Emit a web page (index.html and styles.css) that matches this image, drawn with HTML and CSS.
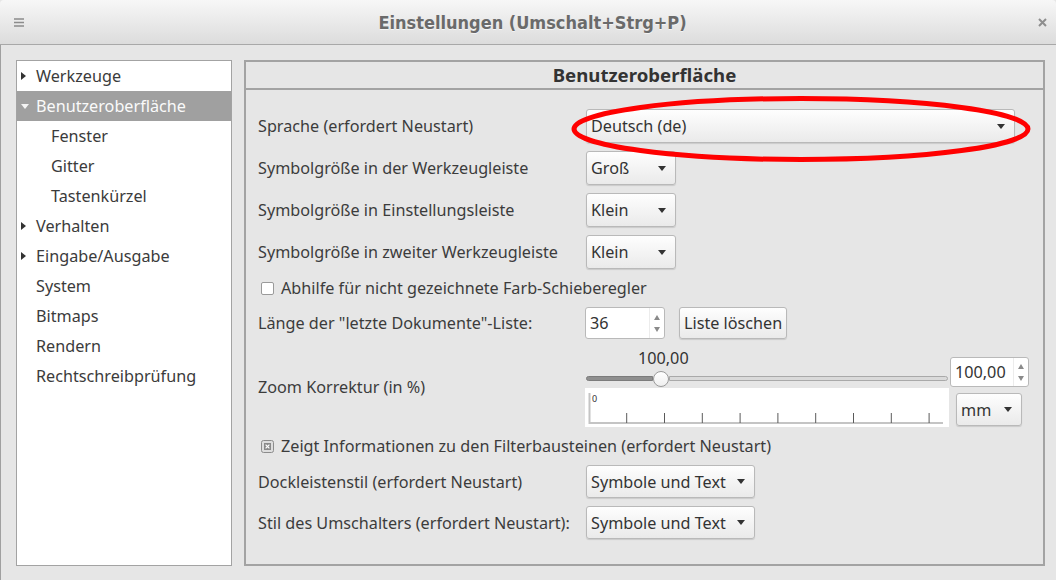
FILE: index.html
```html
<!DOCTYPE html>
<html lang="de">
<head>
<meta charset="utf-8">
<title>Einstellungen</title>
<link rel="stylesheet" href="styles.css">
</head>
<body>
<div class="window">
  <header class="titlebar">
    <span class="menu-icon">
      <svg width="10" height="9" viewBox="0 0 10 9"><path d="M0 1h10M0 4.5h10M0 8h10" stroke="#8c8c8c" stroke-width="1.5"/></svg>
    </span>
    <h1 class="title">Einstellungen (Umschalt+Strg+P)</h1>
    <span class="close-icon">
      <svg width="9" height="9" viewBox="0 0 9 9"><path d="M1 1L8 8M8 1L1 8" stroke="#8e8e8e" stroke-width="2"/></svg>
    </span>
  </header>
  <div class="content">
    <nav class="tree">
      <div class="tree-row"><span class="arrow-slot"><span class="tri-right"></span></span>Werkzeuge</div>
      <div class="tree-row selected"><span class="arrow-slot"><span class="tri-down"></span></span>Benutzeroberfläche</div>
      <div class="tree-row child">Fenster</div>
      <div class="tree-row child">Gitter</div>
      <div class="tree-row child">Tastenkürzel</div>
      <div class="tree-row"><span class="arrow-slot"><span class="tri-right"></span></span>Verhalten</div>
      <div class="tree-row"><span class="arrow-slot"><span class="tri-right"></span></span>Eingabe/Ausgabe</div>
      <div class="tree-row"><span class="arrow-slot"></span>System</div>
      <div class="tree-row"><span class="arrow-slot"></span>Bitmaps</div>
      <div class="tree-row"><span class="arrow-slot"></span>Rendern</div>
      <div class="tree-row"><span class="arrow-slot"></span>Rechtschreibprüfung</div>
    </nav>
    <section class="group">
      <h2 class="group-title">Benutzeroberfläche</h2>
      <div class="form">
        <span class="label">Sprache (erfordert Neustart)</span>
        <div class="combo w-lang"><span>Deutsch (de)</span><span class="caret"></span></div>

        <span class="label">Symbolgröße in der Werkzeugleiste</span>
        <div class="combo w-size"><span>Groß</span><span class="caret"></span></div>

        <span class="label">Symbolgröße in Einstellungsleiste</span>
        <div class="combo w-size"><span>Klein</span><span class="caret"></span></div>

        <span class="label">Symbolgröße in zweiter Werkzeugleiste</span>
        <div class="combo w-size"><span>Klein</span><span class="caret"></span></div>

        <div class="check-row"><span class="box"></span><span>Abhilfe für nicht gezeichnete Farb-Schieberegler</span></div>

        <span class="label">Länge der "letzte Dokumente"-Liste:</span>
        <div class="inline-controls">
          <div class="spin w-spin"><span class="spin-text">36</span><span class="spin-arrows"><span class="up"></span><span class="down"></span></span></div>
          <div class="button">Liste löschen</div>
        </div>

        <span class="label">Zoom Korrektur (in %)</span>
        <div class="zoom">
          <div class="zoom-left">
            <div class="slider-value">100,00</div>
            <div class="slider"><span class="slider-fill"></span><span class="handle"></span><span class="slider-rest"></span></div>
            <div class="ruler">
              <svg width="364" height="39" viewBox="0 0 364 39">
                <path d="M4.5 5V36M4 35H358" stroke="#c4c4c4" stroke-width="2" fill="none"/>
                <path d="M41.7 25V35M79.5 25V35M117.3 25V35M155.1 25V35M192.9 25V35M230.7 25V35M268.5 25V35M306.3 25V35M344.1 25V35" stroke="#5a5a5a" stroke-width="1" fill="none"/>
                <text x="7" y="14" font-size="9" font-family="Noto Sans, sans-serif" fill="#333">0</text>
              </svg>
            </div>
          </div>
          <div class="zoom-right">
            <div class="spin w-zoomspin"><span class="spin-text">100,00</span><span class="spin-arrows"><span class="up"></span><span class="down"></span></span></div>
            <div class="combo w-unit"><span>mm</span><span class="caret"></span></div>
          </div>
        </div>

        <div class="check-row">
          <span class="box-mixed">
            <svg width="13" height="13" viewBox="0 0 13 13"><rect x="0.5" y="0.5" width="12" height="12" rx="2" fill="#dedede" stroke="#8c8c8c"/><rect x="3" y="3" width="7" height="7" fill="#8a8a8a"/><path d="M4.6 4.6L8.4 8.4M8.4 4.6L4.6 8.4" stroke="#fff" stroke-width="1.2"/></svg>
          </span>
          <span>Zeigt Informationen zu den Filterbausteinen (erfordert Neustart)</span>
        </div>

        <span class="label">Dockleistenstil (erfordert Neustart)</span>
        <div class="combo w-style"><span>Symbole und Text</span><span class="caret"></span></div>

        <span class="label">Stil des Umschalters (erfordert Neustart):</span>
        <div class="combo w-style"><span>Symbole und Text</span><span class="caret"></span></div>
      </div>
    </section>
  </div>
  <svg class="annotation" width="1056" height="580" viewBox="0 0 1056 580">
    <ellipse cx="801" cy="129" rx="227" ry="30.5" fill="none" stroke="#ff0000" stroke-width="5"/>
  </svg>
</div>
</body>
</html>
```

FILE: styles.css
```css
* { box-sizing: border-box; }

body {
  margin: 0;
  font-family: "Noto Sans", "Open Sans", sans-serif;
  font-size: 16.2px;
  color: #3c3c3c;
  background: #e6e6e6;
}

.window {
  position: relative;
  width: 1056px;
  height: 580px;
  overflow: hidden;
  background: #e6e6e6;
}

.titlebar {
  height: 45px;
  border-bottom: 1px solid #a8a8a8;
  background: linear-gradient(#f7f7f7, #dcdcdc);
  display: grid;
  grid-template-columns: 40px 1fr 40px;
  align-items: center;
  padding: 0 9px 0 14px;
  border-radius: 4px 4px 0 0;
}

.menu-icon { display: flex; align-items: center; }
.close-icon { display: flex; justify-content: flex-end; align-items: center; }

.title {
  margin: 0;
  text-align: center;
  font-family: "DejaVu Sans Condensed", "DejaVu Sans", sans-serif;
  font-weight: bold;
  font-size: 18px;
  color: #6a6a6a;
  padding-left: 4px;
  text-shadow: 0 1px 0 rgba(255,255,255,0.6);
}

.content {
  display: flex;
  gap: 12px;
  height: 535px;
  padding: 15px 0 0 15px;
  border-left: 1px solid #a0a0a0;
}

.tree {
  width: 216px;
  height: 506px;
  background: #fff;
  border: 1px solid #a3a3a3;
  color: #3b3b3b;
}

.tree-row {
  height: 30px;
  display: flex;
  align-items: center;
  padding-left: 4px;
}

.tree-row.child { padding-left: 34px; }

.tree-row.selected {
  background: #a0a0a0;
  color: #fafafa;
}

.arrow-slot {
  width: 15px;
  display: flex;
  align-items: center;
}

.tri-right {
  width: 0;
  height: 0;
  border-top: 4px solid transparent;
  border-bottom: 4px solid transparent;
  border-left: 5px solid #333;
}

.tri-down {
  width: 0;
  height: 0;
  border-left: 4px solid transparent;
  border-right: 4px solid transparent;
  border-top: 5px solid #f4f4f4;
}

.group {
  width: 801px;
  height: 506px;
  border: 2px solid #a3a3a3;
}

.group-title {
  margin: 0;
  height: 28px;
  border-bottom: 2px solid #a3a3a3;
  font-size: 18.6px;
  font-weight: bold;
  text-align: center;
  line-height: 26px;
  color: #333;
}

.form {
  display: grid;
  grid-template-columns: 327px auto;
  row-gap: 8px;
  padding: 19px 0 0 12px;
  align-items: center;
  justify-items: start;
}

.label { white-space: nowrap; }

.combo {
  height: 34px;
  border: 1px solid #b9b9b9;
  border-radius: 3px;
  background: linear-gradient(#fefefe, #eaeaea);
  box-shadow: 0 1px 1px rgba(0,0,0,0.12);
  display: flex;
  align-items: center;
  justify-content: space-between;
  padding: 0 9px 0 4px;
  margin-left: 1px;
  color: #333;
  white-space: nowrap;
}

.caret {
  width: 0;
  height: 0;
  border-left: 4px solid transparent;
  border-right: 4px solid transparent;
  border-top: 5px solid #333;
}

.w-lang { width: 429px; }
.w-size { width: 90px; }
.w-style { width: 169px; height: 33px; }
.w-unit { width: 66px; height: 33px; margin-left: 6px; margin-top: 6px; }

.check-row {
  grid-column: 1 / -1;
  height: 22px;
  display: flex;
  align-items: center;
  gap: 7px;
  padding-left: 3px;
  white-space: nowrap;
}

.box {
  width: 13px;
  height: 13px;
  border: 1px solid #9a9a9a;
  border-radius: 2px;
  background: #fff;
}

.box-mixed { display: flex; }

.inline-controls {
  display: flex;
  align-items: center;
  gap: 14px;
}

.spin {
  display: flex;
  height: 32px;
  border: 1px solid #b9b9b9;
  border-radius: 3px;
  background: #fff;
  color: #333;
}

.w-spin { width: 80px; }
.w-zoomspin { width: 79px; height: 30px; margin-top: 10px; }

.spin-text {
  flex: 1;
  display: flex;
  align-items: center;
  padding-left: 4px;
}

.spin-arrows {
  width: 15px;
  display: flex;
  flex-direction: column;
  align-items: center;
  justify-content: center;
  gap: 7px;
  border-left: 1px solid #ececec;
}

.spin-arrows .up {
  width: 0;
  height: 0;
  border-left: 3px solid transparent;
  border-right: 3px solid transparent;
  border-bottom: 5px solid #8a8a8a;
}

.spin-arrows .down {
  width: 0;
  height: 0;
  border-left: 3px solid transparent;
  border-right: 3px solid transparent;
  border-top: 5px solid #8a8a8a;
}

.button {
  height: 32px;
  padding: 0 4px;
  display: flex;
  align-items: center;
  border: 1px solid #b9b9b9;
  border-radius: 3px;
  background: linear-gradient(#fefefe, #eaeaea);
  box-shadow: 0 1px 1px rgba(0,0,0,0.12);
  color: #333;
  white-space: nowrap;
}

.zoom {
  display: grid;
  grid-template-columns: 364px 79px;
  column-gap: 1px;
  height: 80px;
}

.zoom-left {
  display: flex;
  flex-direction: column;
}

.slider-value {
  height: 22px;
  line-height: 22px;
  padding-left: 53px;
  color: #333;
}

.slider {
  height: 19px;
  display: flex;
  align-items: center;
  padding-left: 1px;
  padding-right: 1px;
}

.slider-fill {
  width: 67px;
  height: 5px;
  background: #8f8f8f;
  border: 1px solid #7c7c7c;
  border-radius: 3px 0 0 3px;
}

.handle {
  width: 16px;
  height: 16px;
  border-radius: 50%;
  background: linear-gradient(#ffffff, #efefef);
  border: 1px solid #9a9a9a;
  flex: none;
}

.slider-rest {
  flex: 1;
  height: 5px;
  background: #dadada;
  border: 1px solid #a9a9a9;
  border-radius: 0 3px 3px 0;
}

.ruler {
  height: 39px;
  background: #fff;
}

.ruler svg { display: block; }

.zoom-right {
  display: flex;
  flex-direction: column;
}

.annotation {
  position: absolute;
  left: 0;
  top: 0;
  pointer-events: none;
}
```
